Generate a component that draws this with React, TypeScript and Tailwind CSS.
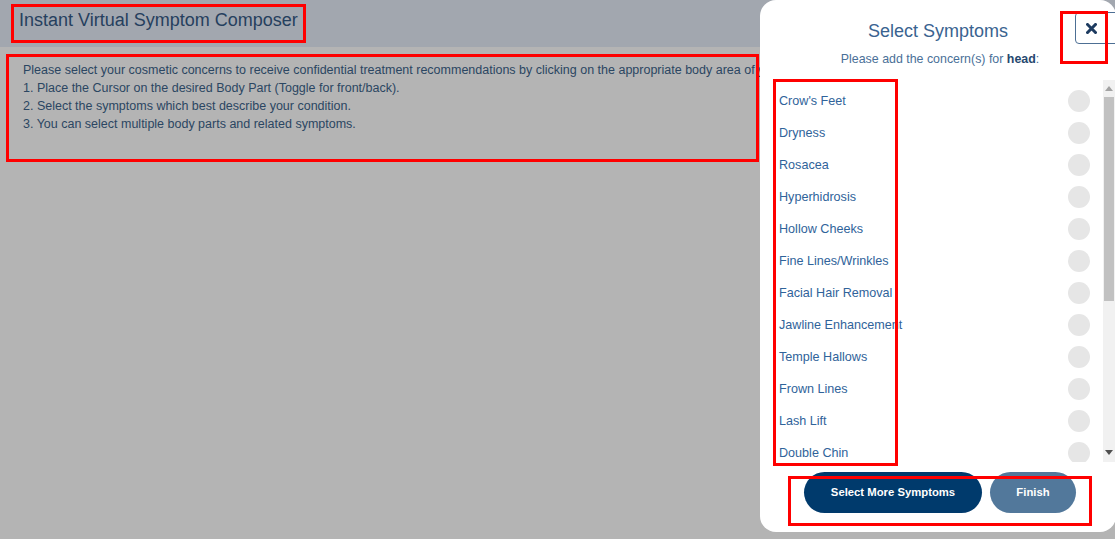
const symptoms = [
  "Crow's Feet",
  'Dryness',
  'Rosacea',
  'Hyperhidrosis',
  'Hollow Cheeks',
  'Fine Lines/Wrinkles',
  'Facial Hair Removal',
  'Jawline Enhancement',
  'Temple Hallows',
  'Frown Lines',
  'Lash Lift',
  'Double Chin',
];

function Highlight({ className }: { className: string }) {
  return <div className={`pointer-events-none absolute border-[3px] border-[#ff0000] ${className}`} />;
}

export default function App() {
  return (
    <div
      className="relative w-[1115px] h-[539px] overflow-hidden bg-[#b4b4b4]"
      style={{ fontFamily: '"Liberation Sans", Arial, sans-serif' }}
    >
      {/* page behind the dialog */}
      <div className="flex flex-col">
        <div className="h-[47px] bg-[#a2a7af] pl-[19px] pt-[9px]">
          <h1 className="text-[18px] leading-[22px] text-[#26405e]">Instant Virtual Symptom Composer</h1>
        </div>
        <div className="mt-[7px] h-[107px] pl-[23px] pt-[7px] text-[12.5px] leading-[18px] text-[#2b4662] whitespace-nowrap">
          <p>
            Please select your cosmetic concerns to receive confidential treatment recommendations by clicking on the
            appropriate body area of your choice.
          </p>
          <p>1. Place the Cursor on the desired Body Part (Toggle for front/back).</p>
          <p>2. Select the symptoms which best describe your condition.</p>
          <p>3. You can select multiple body parts and related symptoms.</p>
        </div>
      </div>

      {/* dialog */}
      <div className="absolute left-[760px] top-0 w-[356px] h-[532px] rounded-[16px] bg-white overflow-hidden flex flex-col items-center">
        <button className="absolute left-[315px] top-[12px] w-[44px] h-[32px] bg-white border border-[#4d6f94] rounded-[4px] flex items-center pl-[10px]">
          <svg width="11" height="11" viewBox="0 0 11 11">
            <path d="M1.5 1.5 L9.5 9.5 M9.5 1.5 L1.5 9.5" stroke="#1d3b60" strokeWidth="3" strokeLinecap="square" />
          </svg>
        </button>

        <h2 className="mt-[21px] text-[18px] leading-[20px] text-[#3a6390]">Select Symptoms</h2>
        <p className="mt-[11px] ml-[4px] text-[12.4px] leading-[14px] text-[#4a7098]">
          Please add the concern(s) for <span className="font-bold text-[#26486f]">head</span>:
        </p>

        <div className="mt-[14px] w-full h-[382px] flex">
          <div className="flex-1 overflow-hidden pt-[5px]">
            {symptoms.map((s) => (
              <div key={s} className="h-[32px] flex items-center justify-between pl-[19px] pr-[13px]">
                <span className="text-[12.6px] text-[#30639a]">{s}</span>
                <span className="w-[22px] h-[22px] rounded-full bg-[#e6e6e6]" />
              </div>
            ))}
          </div>
          <div className="w-[12px] mr-[1px] bg-[#f1f1f1] flex flex-col items-center">
            <svg width="8" height="5" viewBox="0 0 8 5" className="mt-[6px]">
              <path d="M0 5 L4 0 L8 5 Z" fill="#a3a3a3" />
            </svg>
            <div className="mt-[6px] w-[10px] h-[204px] bg-[#c1c1c1]" />
            <div className="flex-1" />
            <svg width="8" height="5" viewBox="0 0 8 5" className="mb-[7px]">
              <path d="M0 0 L8 0 L4 5 Z" fill="#505050" />
            </svg>
          </div>
        </div>

        <div className="mt-[10px] ml-[4px] flex gap-[8px]">
          <button className="w-[178px] h-[41px] rounded-full bg-[#003a6c] text-white text-[11.3px] font-bold">
            Select More Symptoms
          </button>
          <button className="w-[86px] h-[41px] rounded-full bg-[#52789b] text-white text-[11.3px] font-bold">
            Finish
          </button>
        </div>
      </div>

      {/* annotation boxes */}
      <Highlight className="left-[11px] top-[4px] w-[295px] h-[39px]" />
      <Highlight className="left-[6px] top-[54px] w-[753px] h-[108px]" />
      <Highlight className="left-[1060px] top-[11px] w-[48px] h-[53px]" />
      <Highlight className="left-[773px] top-[79px] w-[125px] h-[387px]" />
      <Highlight className="left-[788px] top-[476px] w-[304px] h-[50px]" />
    </div>
  );
}
